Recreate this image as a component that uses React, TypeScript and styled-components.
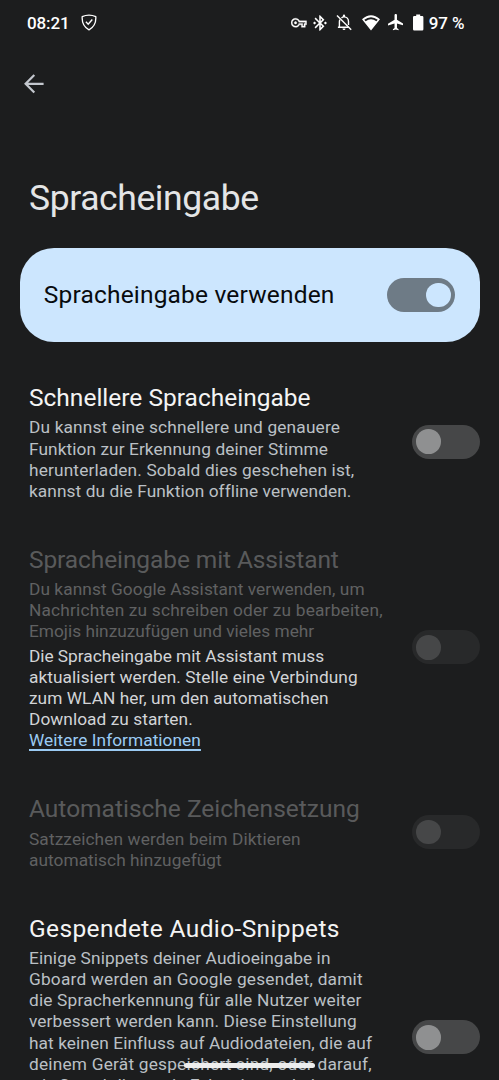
import React from "react";
import styled, { createGlobalStyle } from "styled-components";

const Global = createGlobalStyle`
  * { box-sizing: border-box; }
  html, body { margin: 0; background: #1c1d1e; }
  body { overflow: hidden; }
`;

const Screen = styled.div`
  position: relative;
  display: flex;
  flex-direction: column;
  width: 499px;
  height: 1080px;
  overflow: hidden;
  background: #1c1d1e;
  font-family: Roboto, sans-serif;
`;

const StatusBar = styled.header`
  display: flex;
  align-items: center;
  justify-content: space-between;
  flex: none;
  height: 45px;
  padding: 0 34px 0 27px;
  color: #fff;
`;

const StatusGroup = styled.div`
  display: flex;
  align-items: center;
`;

const StatusLabel = styled.span<{ $width: number }>`
  width: ${(p) => p.$width}px;
  font-size: 17px;
  font-weight: 500;
  line-height: 20px;
  white-space: nowrap;
  letter-spacing: -0.1px;
`;

const BatteryLabel = styled(StatusLabel)`
  margin-left: 5.3px;
`;

const StatusIcon = styled.svg<{ $gap: number }>`
  display: block;
  flex: none;
  margin-left: ${(p) => p.$gap}px;
  fill: currentColor;
`;

const TopBar = styled.nav`
  display: flex;
  align-items: center;
  flex: none;
  height: 77px;
  padding-left: 24px;
`;

const BackButton = styled.button`
  display: flex;
  padding: 0;
  border: 0;
  background: none;
  color: #c3c7ce;
`;

const PageTitle = styled.h1`
  flex: none;
  height: 71.3px;
  margin: 55px 0 0 29px;
  font-size: 35.5px;
  font-weight: 400;
  line-height: 42px;
  letter-spacing: -0.4px;
  color: #e4e5e6;
`;

const MainCard = styled.section`
  display: flex;
  align-items: center;
  justify-content: space-between;
  flex: none;
  height: 93.4px;
  margin: 0 19.3px 0 19.5px;
  padding: 0 24.3px;
  border-radius: 34px;
  background: #cce6fe;
  color: #080b0e;
  font-size: 24.5px;
  line-height: 30px;
`;

const Settings = styled.main`
  display: flex;
  flex-direction: column;
  gap: 42.7px;
  padding: 41.3px 19.3px 0 29px;
`;

const Setting = styled.section<{ $disabled?: boolean; $height?: number }>`
  display: flex;
  align-items: center;
  justify-content: space-between;
  flex: none;
  height: ${(p) => (p.$height ? `${p.$height}px` : "auto")};
  color: ${(p) => (p.$disabled ? "#606162" : "#bbc0c5")};
  --title: ${(p) => (p.$disabled ? "#595a5b" : "#f4f4f4")};
`;

const SettingText = styled.div`
  align-self: flex-start;
`;

const SettingTitle = styled.h2`
  margin: 0 0 4.4px;
  font-size: 24.5px;
  font-weight: 400;
  line-height: 30px;
  color: var(--title);
`;

const Paragraph = styled.p<{ $notice?: boolean }>`
  margin: ${(p) => (p.$notice ? "3.2px 0 0" : "0")};
  font-size: 17.3px;
  line-height: 21.15px;
  color: ${(p) => (p.$notice ? "#d2d4d7" : "inherit")};
`;

const Line = styled.span<{ $spacing: number }>`
  display: block;
  width: max-content;
  white-space: nowrap;
  letter-spacing: ${(p) => p.$spacing}px;
`;

const InfoLink = styled.a`
  display: block;
  width: max-content;
  color: #9bcbf3;
  letter-spacing: 0.05px;
  text-decoration: underline;
  text-decoration-thickness: 1.5px;
  text-underline-offset: 3px;
  text-decoration-skip-ink: none;
`;

const Track = styled.span<{ $tone: string }>`
  display: flex;
  align-items: center;
  flex: none;
  width: 68px;
  height: 34px;
  padding: 0 4.5px;
  border-radius: 17px;
  background: ${(p) => p.$tone};
`;

const OffTrack = styled(Track)`
  margin-bottom: 1.5px;
`;

const Thumb = styled.span<{ $on?: boolean; $tone: string }>`
  width: 24.6px;
  height: 24.6px;
  margin-left: ${(p) => (p.$on ? "auto" : "0")};
  border-radius: 50%;
  background: ${(p) => p.$tone};
`;

const HomeHandle = styled.div`
  position: absolute;
  left: 184.3px;
  bottom: 12.5px;
  width: 130.5px;
  height: 4.6px;
  border-radius: 3px;
  background: #ededed;
`;

type TextLine = [text: string, spacing: number];

const Lines = ({ rows }: { rows: TextLine[] }) => (
  <>
    {rows.map(([text, spacing]) => (
      <Line key={text} $spacing={spacing}>
        {text}
      </Line>
    ))}
  </>
);

const Switch = ({ disabled }: { disabled?: boolean }) => (
  <OffTrack $tone={disabled ? "#28292a" : "#464748"}>
    <Thumb $tone={disabled ? "#464748" : "#8f9091"} />
  </OffTrack>
);

export default function App() {
  return (
    <Screen>
      <Global />
      <StatusBar>
        <StatusGroup>
          <StatusLabel $width={43}>08:21</StatusLabel>
          <StatusIcon $gap={10.6} width="16" height="17" viewBox="0 0 16 17">
            <path
              d="M8 1.1C5.8 1.1 3.4 1.6 1.2 2.6C.8 8.2 2.3 12.8 8 15.9C13.7 12.8 15.2 8.2 14.8 2.6C12.6 1.6 10.2 1.1 8 1.1Z"
              fill="none"
              stroke="currentColor"
              strokeWidth="1.3"
              strokeLinejoin="round"
            />
            <path d="M4.9 7.8L7.2 10.2L11.3 5.5" fill="none" stroke="currentColor" strokeWidth="1.4" />
          </StatusIcon>
        </StatusGroup>
        <StatusGroup>
          <StatusIcon $gap={0} width="15.6" height="15.6" viewBox="0 0 24 24">
            <path
              stroke="currentColor"
              strokeWidth="0.5"
              d="M22 19h-6v-4h-2.68c-1.14 2.42-3.6 4-6.32 4-3.86 0-7-3.14-7-7s3.14-7 7-7c2.72 0 5.17 1.58 6.32 4H24v6h-2v4zm-4-2h2v-4h2v-2H11.94l-.23-.67C11.01 8.34 9.11 7 7 7c-2.76 0-5 2.24-5 5s2.24 5 5 5c2.11 0 4.01-1.34 4.71-3.33l.23-.67H18v4zM7 14c-1.1 0-2-.9-2-2s.9-2 2-2 2 .9 2 2-.9 2-2 2z"
            />
          </StatusIcon>
          <StatusIcon $gap={5.8} width="14" height="16" viewBox="3 1.8 18 20.4">
            <path d="M7 12l-2-2-2 2 2 2 2-2zm10.71-4.29L12 2h-1v7.59L6.41 5 5 6.41 10.59 12 5 17.59 6.41 19 11 14.41V22h1l5.71-5.71-4.3-4.29 4.3-4.29zM13 5.83l1.88 1.88L13 9.59V5.83zm1.88 10.46L13 18.17v-3.76l1.88 1.88zM19 10l-2 2 2 2 2-2-2-2z" />
          </StatusIcon>
          <StatusIcon $gap={9.3} width="16" height="17" viewBox="0 0 16 17">
            <g fill="none" stroke="currentColor" strokeWidth="1.4">
              <path d="M1 1.4L15.2 15.7" />
              <path d="M3.9 5.6C3.5 6.4 3.4 7.1 3.4 8V12.7M1.9 13.2H12.6" />
              <path d="M5.5 3.9C6.2 3.2 7 2.9 8 2.9C10.8 2.9 12.5 5 12.5 7.6V11" />
            </g>
            <path d="M6.9 1.5a1.1 1.1 0 0 1 2.2 0v1.6H6.9zM6.5 14.4h3a1.5 1.5 0 0 1-3 0z" />
          </StatusIcon>
          <StatusIcon $gap={10} width="18" height="16" viewBox="0 0 18 16">
            <path
              fillRule="evenodd"
              d="M0 4.2Q9-3.6 18 4.2L9 15.6ZM2.3 4.7L3.6 6.3Q9 2.2 14.4 6.3L15.7 4.7Q9-.4 2.3 4.7Z"
            />
          </StatusIcon>
          <StatusIcon $gap={7.8} width="15.5" height="16.4" viewBox="2 2 19 20">
            <path d="M21 16v-2l-8-5V3.5c0-.83-.67-1.5-1.5-1.5S10 2.67 10 3.5V9l-8 5v2l8-2.5V19l-2 1.5V22l3.5-1 3.5 1v-1.5L13 19v-5.5l8 2.5z" />
          </StatusIcon>
          <StatusIcon $gap={9.8} width="10.4" height="17" viewBox="0 0 10.4 17">
            <path d="M3.2.5h4v1.6h2a1.2 1.2 0 0 1 1.2 1.2v12a1.2 1.2 0 0 1-1.2 1.2h-8a1.2 1.2 0 0 1-1.2-1.2v-12a1.2 1.2 0 0 1 1.2-1.2h2z" />
          </StatusIcon>
          <BatteryLabel $width={36.2}>97 %</BatteryLabel>
        </StatusGroup>
      </StatusBar>

      <TopBar>
        <BackButton aria-label="Zurück">
          <svg width="20" height="20" viewBox="0 0 20 20" fill="none" stroke="currentColor" strokeWidth="2.2">
            <path d="M1.8 9.8H19.6M10.3 1L1.6 9.8L10.3 18.6" />
          </svg>
        </BackButton>
      </TopBar>

      <PageTitle>Spracheingabe</PageTitle>

      <MainCard>
        <Line $spacing={0.18}>Spracheingabe verwenden</Line>
        <Track $tone="#6e7b86">
          <Thumb $on $tone="#cce6fe" />
        </Track>
      </MainCard>

      <Settings>
        <Setting>
          <SettingText>
            <SettingTitle>Schnellere Spracheingabe</SettingTitle>
            <Paragraph>
              <Lines
                rows={[
                  ["Du kannst eine schnellere und genauere", 0.16],
                  ["Funktion zur Erkennung deiner Stimme", 0.08],
                  ["herunterladen. Sobald dies geschehen ist,", 0.15],
                  ["kannst du die Funktion offline verwenden.", 0.08],
                ]}
              />
            </Paragraph>
          </SettingText>
          <Switch />
        </Setting>

        <Setting $disabled>
          <SettingText>
            <SettingTitle>
              <Line $spacing={-0.1}>Spracheingabe mit Assistant</Line>
            </SettingTitle>
            <Paragraph>
              <Lines
                rows={[
                  ["Du kannst Google Assistant verwenden, um", 0.07],
                  ["Nachrichten zu schreiben oder zu bearbeiten,", 0.19],
                  ["Emojis hinzuzufügen und vieles mehr", 0],
                ]}
              />
            </Paragraph>
            <Paragraph $notice>
              <Lines
                rows={[
                  ["Die Spracheingabe mit Assistant muss", -0.03],
                  ["aktualisiert werden. Stelle eine Verbindung", 0.07],
                  ["zum WLAN her, um den automatischen", 0.05],
                  ["Download zu starten.", 0.05],
                ]}
              />
              <InfoLink>Weitere Informationen</InfoLink>
            </Paragraph>
          </SettingText>
          <Switch disabled />
        </Setting>

        <Setting $disabled>
          <SettingText>
            <SettingTitle>Automatische Zeichensetzung</SettingTitle>
            <Paragraph>
              <Lines
                rows={[
                  ["Satzzeichen werden beim Diktieren", 0.11],
                  ["automatisch hinzugefügt", 0.05],
                ]}
              />
            </Paragraph>
          </SettingText>
          <Switch disabled />
        </Setting>

        <Setting $height={249}>
          <SettingText>
            <SettingTitle>
              <Line $spacing={0.37}>Gespendete Audio-Snippets</Line>
            </SettingTitle>
            <Paragraph>
              <Lines
                rows={[
                  ["Einige Snippets deiner Audioeingabe in", 0.1],
                  ["Gboard werden an Google gesendet, damit", 0.2],
                  ["die Spracherkennung für alle Nutzer weiter", 0.18],
                  ["verbessert werden kann. Diese Einstellung", 0.1],
                  ["hat keinen Einfluss auf Audiodateien, die auf", 0.08],
                  ["deinem Gerät gespeichert sind, oder darauf,", 0.21],
                  ["wie Sprachdienste in Echtzeit verarbeitet", -0.1],
                ]}
              />
            </Paragraph>
          </SettingText>
          <Switch />
        </Setting>
      </Settings>
      <HomeHandle />
    </Screen>
  );
}
